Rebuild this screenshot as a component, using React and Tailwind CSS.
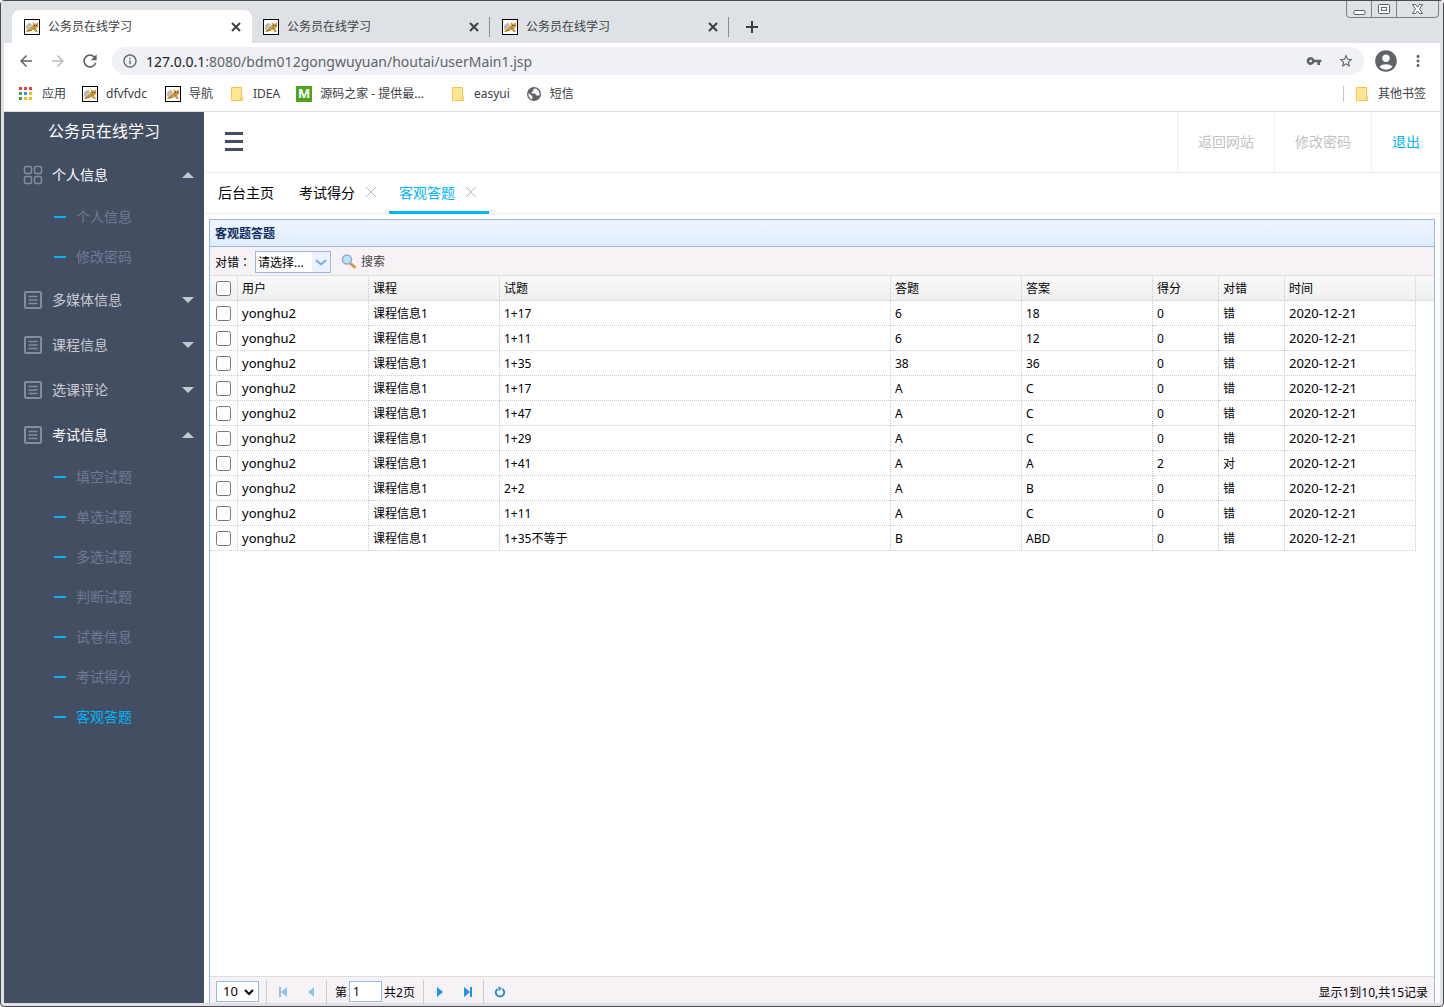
import React, { useState } from 'react';
import { MdArrowBack, MdArrowForward, MdRefresh, MdInfoOutline, MdVpnKey, MdStarBorder, MdAccountCircle, MdMoreVert } from 'react-icons/md';

const browserTabs = ['公务员在线学习', '公务员在线学习', '公务员在线学习'];

const menus = [
  { name: '个人信息', icon: 'grid', open: true, children: ['个人信息', '修改密码'] },
  { name: '多媒体信息', children: [] },
  { name: '课程信息', children: [] },
  { name: '选课评论', children: [] },
  {
    name: '考试信息',
    open: true,
    children: ['填空试题', '单选试题', '多选试题', '判断试题', '试卷信息', '考试得分', '客观答题'],
  },
];

const columns = ['用户', '课程', '试题', '答题', '答案', '得分', '对错', '时间'];

const answers = [
  ['1+17', '6', '18', '0', '错'],
  ['1+11', '6', '12', '0', '错'],
  ['1+35', '38', '36', '0', '错'],
  ['1+17', 'A', 'C', '0', '错'],
  ['1+47', 'A', 'C', '0', '错'],
  ['1+29', 'A', 'C', '0', '错'],
  ['1+41', 'A', 'A', '2', '对'],
  ['2+2', 'A', 'B', '0', '错'],
  ['1+11', 'A', 'C', '0', '错'],
  ['1+35不等于', 'B', 'ABD', '0', '错'],
];

function TomcatIcon() {
  return (
    <svg className="h-4 w-4 shrink-0" viewBox="0 0 16 16">
      <rect x="0.5" y="0.5" width="15" height="15" fill="#fff" stroke="#000" />
      <path d="M2 7 4 4.500 6.500 4 8 6 5 8.500 3 11 2 10Z" fill="#b9b9b4" />
      <path d="M2 13 4 10 7 7.500 9 6 8.500 3 10.500 4.500H12.500L14.200 3 14 8 12 9.500 14 13H11.500L10 11 7 11 5 13Z" fill="#cf9a45" />
      <path d="M4 11.500H8M9 8.500 11.500 9.500" stroke="#a5742c" />
      <path d="M10 6.500h1M12 6.500h1" stroke="#4d3512" />
    </svg>
  );
}

function FolderIcon() {
  return (
    <svg className="h-4 w-4 shrink-0" viewBox="0 0 16 16">
      <path d="M2.5 1.5h10v9.5h1v3.5h-11Z" fill="#ffe694" stroke="#f3c64b" />
      <path d="M11.5 14v-2.5l1-1" fill="none" stroke="#f3c64b" />
    </svg>
  );
}

function AppsIcon() {
  const colors = ['#ea4335', '#ea4335', '#ea4335', '#34a853', '#4285f4', '#fbbc05', '#34a853', '#fbbc05', '#fbbc05'];
  return (
    <svg className="h-4 w-4 shrink-0" viewBox="0 0 16 16">
      {colors.map((c, i) => (
        <rect key={i} x={1 + (i % 3) * 5} y={1 + Math.floor(i / 3) * 5} width="3" height="3" fill={c} />
      ))}
    </svg>
  );
}

function GlobeIcon() {
  return (
    <svg className="h-4 w-4 shrink-0" viewBox="0 0 16 16">
      <circle cx="8" cy="8" r="7" fill="#5f6368" />
      <path d="M9 2.500C7 3 6.500 4 7.500 5L5.500 6 6 7.500H9L10.500 9.500H13.500C14 6 12 3 9 2.500Z" fill="#fff" />
      <path d="M2.500 7 5.500 9.500 6.500 11 6 13.500C3.500 12.500 2 10 2.500 7Z" fill="#fff" />
    </svg>
  );
}

function WindowButtons() {
  const box = 'flex h-[17px] items-center justify-center border-b border-l border-[#7c8086]';
  return (
    <div className="mr-1 flex self-start overflow-hidden rounded-b border-r border-[#7c8086]">
      <button aria-label="最小化" className={`${box} w-[25px] rounded-bl`}>
        <svg width="13" height="13"><rect x="1" y="7.5" width="11" height="4" rx="1" fill="#fff" stroke="#5b5f66" /></svg>
      </button>
      <button aria-label="最大化" className={`${box} w-[25px]`}>
        <svg width="13" height="13">
          <rect x="0.5" y="1.5" width="11" height="9" rx="1" fill="#fff" stroke="#5b5f66" />
          <rect x="3.5" y="4.5" width="5" height="3" fill="#fff" stroke="#5b5f66" />
        </svg>
      </button>
      <button aria-label="关闭" className={`${box} w-[42px] rounded-br`}>
        <svg width="13" height="13">
          <path d="M1.5 1.5h3l2 2.5 2-2.5h3L8.5 6l3 4.5h-3l-2-2.5-2 2.5h-3L4.5 6Z" fill="#fff" stroke="#5b5f66" />
        </svg>
      </button>
    </div>
  );
}

function BrowserChrome() {
  return (
    <header className="shrink-0 text-[12px] text-[#3c4043]">
      <div className="flex h-[42px] bg-[#dee1e6] pl-[11px]">
        {browserTabs.map((title, i) => (
          <div
            key={i}
            className={`mt-[9px] flex h-[33px] items-center pl-3 ${i === 0 ? '-mr-px w-[240px] rounded-t-lg bg-white pr-[10px]' : 'w-[239px]'}`}
          >
            <TomcatIcon />
            <span className="ml-2 flex-1">{title}</span>
            <button aria-label="关闭标签页">
              <svg width="12" height="12"><path d="M2 2 10 10M10 2 2 10" stroke="#3c4043" strokeWidth="2" /></svg>
            </button>
            {i > 0 && <span className="ml-[9px] h-5 w-px bg-[#8a8d91]" />}
          </div>
        ))}
        <button aria-label="新标签页" className="ml-4 mt-[9px] flex h-[33px] items-center">
          <svg width="14" height="14"><path d="M7 1v12M1 7h12" stroke="#3c4043" strokeWidth="2" /></svg>
        </button>
        <div className="flex-1" />
        <WindowButtons />
      </div>

      <div className="mx-[3px] bg-white">
        <div className="flex h-9 items-center pr-[13px] pl-[13px]">
          <button aria-label="后退"><MdArrowBack className="h-[18px] w-[18px] text-[#5f6368]" /></button>
          <button aria-label="前进" className="ml-[14px]"><MdArrowForward className="h-[18px] w-[18px] text-[#babcbe]" /></button>
          <button aria-label="重新加载" className="ml-[13px]"><MdRefresh className="h-5 w-5 text-[#5f6368]" /></button>
          <div className="ml-3 flex h-7 flex-1 items-center rounded-full bg-[#eff1f6] pr-[10px] pl-[10px]">
            <MdInfoOutline className="h-4 w-4 text-[#5f6368]" />
            <span className="ml-2 flex-1 text-[14px] text-[#5f6368]">
              <span className="text-[#202124]">127.0.0.1</span>:8080/bdm012gongwuyuan/houtai/userMain1.jsp
            </span>
            <MdVpnKey className="h-4 w-4 text-[#5f6368]" />
            <MdStarBorder className="ml-4 h-4 w-4 text-[#5f6368]" />
          </div>
          <MdAccountCircle className="ml-[9px] h-[26px] w-[26px] text-[#5f6368]" />
          <MdMoreVert className="ml-[10px] h-[18px] w-[18px] text-[#5f6368]" />
        </div>

        <nav className="flex h-[33px] items-center border-b border-[#d9dbde] pr-[14px] pl-[14px] pb-[3px]">
          <a href="#" className="flex items-center gap-2"><AppsIcon />应用</a>
          <a href="#" className="ml-4 flex items-center gap-2"><TomcatIcon />dfvfvdc</a>
          <a href="#" className="ml-[18px] flex items-center gap-2"><TomcatIcon />导航</a>
          <a href="#" className="ml-4 flex items-center gap-2"><FolderIcon />IDEA</a>
          <a href="#" className="ml-4 flex items-center gap-2">
            <span className="flex h-4 w-4 items-center justify-center bg-[#4da51f] text-[13px] font-bold text-white">M</span>
            源码之家 - 提供最...
          </a>
          <a href="#" className="ml-[26px] flex items-center gap-2"><FolderIcon />easyui</a>
          <a href="#" className="ml-4 flex items-center gap-2"><GlobeIcon />短信</a>
          <div className="flex-1" />
          <a href="#" className="flex items-center gap-2">
            <span className="mr-[2px] h-4 w-px bg-[#c6c8cb]" /><FolderIcon />其他书签
          </a>
        </nav>
      </div>
    </header>
  );
}

function MenuIcon({ type }) {
  if (type === 'grid') {
    return (
      <svg className="h-5 w-5" viewBox="0 0 20 20" fill="none" stroke="#858c9b" strokeWidth="1.5">
        <rect x="1.5" y="1.5" width="7" height="7" rx="1.5" />
        <rect x="11.5" y="1.5" width="7" height="7" rx="1.5" />
        <rect x="1.5" y="11.5" width="7" height="7" rx="1.5" />
        <rect x="11.5" y="11.5" width="7" height="7" rx="1.5" />
      </svg>
    );
  }
  return (
    <svg className="h-5 w-5" viewBox="0 0 20 20" fill="none" stroke="#858c9b">
      <rect x="2" y="2" width="16" height="16" rx="1" strokeWidth="2" />
      <path d="M5.500 6.500h9M5.500 10h9M5.500 13.500h9" strokeWidth="1.500" />
    </svg>
  );
}

function Sidebar({ current, onSelect }) {
  return (
    <aside className="w-[200px] shrink-0 bg-[#444e63]">
      <h1 className="flex h-10 items-center justify-center pb-[2px] text-[16px] text-white">公务员在线学习</h1>
      {menus.map((menu) => (
        <div key={menu.name}>
          <button
            className={`flex h-[45px] w-full items-center pr-[10px] pl-[19px] text-[14px] ${menu.open ? 'text-white' : 'text-[#c8cbd1]'}`}
          >
            <MenuIcon type={menu.icon} />
            <span className="ml-[9px] flex-1 text-left">{menu.name}</span>
            <svg width="12" height="6" fill="#c5c8ce">
              {menu.open ? <path d="M6 0 12 6H0Z" /> : <path d="M0 0H12L6 6Z" />}
            </svg>
          </button>
          {menu.children.map((child) => (
            <a
              key={child}
              href="#"
              onClick={() => onSelect(child)}
              className={`flex h-10 items-center pl-[50px] text-[14px] ${child === current ? 'text-[#00b5f9]' : 'text-[#6f7a91]'}`}
            >
              <span className="mr-[10px] h-[2px] w-3 bg-[#00b5f9]" />
              <span className="pb-[2px]">{child}</span>
            </a>
          ))}
        </div>
      ))}
    </aside>
  );
}

function AppHeader() {
  const link = 'flex h-full items-center border-l border-[#efeff2] px-5 pb-[2px]';
  return (
    <div className="flex h-[61px] shrink-0 items-center border-b border-[#ededed] text-[14px] text-[#c2c2c2]">
      <button aria-label="菜单" className="mb-[2px] ml-[21px] flex w-[18px] flex-col gap-[5px]">
        <span className="h-[3px] bg-[#444e63]" />
        <span className="h-[3px] bg-[#444e63]" />
        <span className="h-[3px] bg-[#444e63]" />
      </button>
      <div className="flex-1" />
      <a href="#" className={link}>返回网站</a>
      <a href="#" className={link}>修改密码</a>
      <a href="#" className={`${link} text-[#00b5f9]`}>退出</a>
    </div>
  );
}

function CloseMark() {
  return (
    <svg className="ml-[10px]" width="12" height="12">
      <path d="M1 1 11 11M11 1 1 11" stroke="#b8b8b8" />
    </svg>
  );
}

function PageTabs() {
  return (
    <div className="flex h-[41px] shrink-0 border-b border-[#ededed] text-[14px] text-black">
      <button className="w-[85px] pb-[2px] pl-[14px] text-left">后台主页</button>
      <button className="flex w-[100px] items-center pb-[2px] pl-[10px]">考试得分<CloseMark /></button>
      <button className="-mb-px flex w-[100px] items-center border-b-[3px] border-[#00b5f9] pl-[10px] text-[#00b5f9]">
        客观答题<CloseMark />
      </button>
    </div>
  );
}

function SearchBar() {
  return (
    <div className="flex h-[29px] shrink-0 items-center border-b border-[#dddddd] bg-[#f7f2f6] px-[5px] pt-[2px]">
      <label htmlFor="result">对错<span className="font-['Noto_Sans_CJK_TC',sans-serif]">：</span></label>
      <div className="relative ml-1 h-[22px] w-[76px] border border-[#95b8e7] bg-white">
        <select id="result" className="h-full w-full appearance-none pt-[2px] pl-[2px] text-[12px] text-black outline-none">
          <option>请选择...</option>
          <option>对</option>
          <option>错</option>
        </select>
        <span className="pointer-events-none absolute inset-y-0 right-0 flex w-[18px] items-center justify-center bg-[#edf2ff]">
          <svg width="12" height="7"><path d="M1 1 6 5.500 11 1" fill="none" stroke="#6fb0ea" strokeWidth="2" /></svg>
        </span>
      </div>
      <button className="ml-[10px] flex items-center gap-1 text-[#444]">
        <svg width="16" height="16">
          <path d="M9 9 13.500 13" stroke="#e0913a" strokeWidth="3" strokeLinecap="round" />
          <circle cx="6" cy="5.500" r="4.500" fill="#bfe0fa" stroke="#8eb0d0" strokeWidth="1.500" />
        </svg>
        搜索
      </button>
    </div>
  );
}

function AnswerTable() {
  const head = 'border-r border-b border-[#dddddd] border-r-[#cccccc] [border-right-style:dotted]';
  const cell = 'border-r border-b border-dotted border-[#cccccc]';
  return (
    <table className="w-full table-fixed border-separate border-spacing-0">
      <colgroup>
        <col className="w-7" />
        <col className="w-[131px]" />
        <col className="w-[131px]" />
        <col />
        <col className="w-[131px]" />
        <col className="w-[131px]" />
        <col className="w-[66px]" />
        <col className="w-[66px]" />
        <col className="w-[131px]" />
        <col className="w-[18px]" />
      </colgroup>
      <thead>
        <tr className="h-[25px] bg-linear-to-b from-[#f9f9f9] to-[#efefef]">
          <th className={head}>
            <input type="checkbox" aria-label="全选" className="mx-auto block h-[15px] w-[15px]" />
          </th>
          {columns.map((name) => (
            <th key={name} className={`${head} px-1 pt-[2px] text-left font-normal`}>{name}</th>
          ))}
          <th className="border-b border-[#dddddd]" />
        </tr>
      </thead>
      <tbody>
        {answers.map((row, i) => (
          <tr key={i} className="h-[25px]">
            <td className={cell}>
              <input type="checkbox" aria-label={`选择第${i + 1}行`} className="mx-auto block h-[15px] w-[15px]" />
            </td>
            {['yonghu2', '课程信息1', ...row, '2020-12-21'].map((text, j) => (
              <td key={j} className={`${cell} px-1 pt-[2px] ${j === 0 || j === 7 ? 'text-[13px]' : ''}`}>{text}</td>
            ))}
            <td />
          </tr>
        ))}
      </tbody>
    </table>
  );
}

function Pagination() {
  const [page, setPage] = useState('1');

  return (
    <div className="flex h-[27px] shrink-0 items-center border-t border-[#dddddd] bg-[#f7f2f6] pt-[3px] pr-[6px] pl-[6px]">
      <div className="relative h-[21px] w-[43px] border border-[#95b8e7] bg-white">
        <select aria-label="每页条数" className="h-full w-full appearance-none pl-[6px] text-[13px] leading-none outline-none">
          <option>10</option>
          <option>20</option>
        </select>
        <svg className="pointer-events-none absolute top-[7px] right-1" width="10" height="7">
          <path d="M1 1 5 5 9 1" fill="none" stroke="#000" strokeWidth="2" />
        </svg>
      </div>
      <span className="ml-[7px] h-6 w-px bg-[#cccccc]" />
      <button aria-label="首页" className="ml-3 flex">
        <svg width="10" height="10" fill="#8bc4ee"><path d="M0 0h2v10H0ZM8 0v10L2 5Z" /></svg>
      </button>
      <button aria-label="上一页" className="ml-[18px] flex">
        <svg width="8" height="10" fill="#8bc4ee"><path d="M7 0v10L1 5Z" /></svg>
      </button>
      <span className="ml-[11px] h-6 w-px bg-[#cccccc]" />
      <label htmlFor="page" className="ml-2 pt-[2px]">第</label>
      <input
        id="page"
        value={page}
        onChange={(e) => setPage(e.target.value)}
        className="ml-[2px] h-[21px] w-[33px] border border-[#95b8e7] bg-white px-[3px] text-[12px] outline-none"
      />
      <span className="ml-[2px] pt-[2px]">共2页</span>
      <span className="ml-2 h-6 w-px bg-[#cccccc]" />
      <button aria-label="下一页" className="ml-3 flex">
        <svg width="8" height="10" fill="#1a94ec"><path d="M1 0v10L7 5Z" /></svg>
      </button>
      <button aria-label="末页" className="ml-5 flex">
        <svg width="10" height="10" fill="#1a94ec"><path d="M0 0v10L6 5ZM6 0h2v10H6Z" /></svg>
      </button>
      <span className="ml-[9px] h-6 w-px bg-[#cccccc]" />
      <button aria-label="刷新" className="ml-[10px] flex">
        <svg width="12" height="12">
          <path d="M8.500 3A4.200 4.200 0 1 1 3.500 3" fill="none" stroke="#2a8fd4" strokeWidth="2" />
          <path d="M4.500 0 8 2.500 4.500 5Z" fill="#2a8fd4" />
        </svg>
      </button>
      <span className="ml-auto pt-[2px]">显示1到10,共15记录</span>
    </div>
  );
}

export default function App() {
  const [current, setCurrent] = useState('客观答题');

  return (
    <div className="flex h-screen flex-col rounded-[4px] border border-[#4b4b4f] bg-[#dee1e6] pb-[3px] font-['Noto_Sans','Noto_Sans_CJK_SC',sans-serif]">
      <BrowserChrome />
      <div className="mx-[3px] flex min-h-0 flex-1 bg-white">
        <Sidebar current={current} onSelect={setCurrent} />
        <main className="flex min-w-0 flex-1 flex-col">
          <AppHeader />
          <PageTabs />
          <section className="mx-[5px] mt-[5px] flex min-h-0 flex-1 flex-col border border-b-0 border-[#95b8e7] text-[12px] text-black">
            <h2 className="flex h-[27px] shrink-0 items-center border-b border-[#95b8e7] bg-linear-to-b from-[#eff5ff] to-[#e0ecff] px-[5px] pt-[2px] font-bold text-[#0e2d5f]">
              客观题答题
            </h2>
            <SearchBar />
            <div className="flex-1">
              <AnswerTable />
            </div>
            <Pagination />
          </section>
        </main>
      </div>
    </div>
  );
}
